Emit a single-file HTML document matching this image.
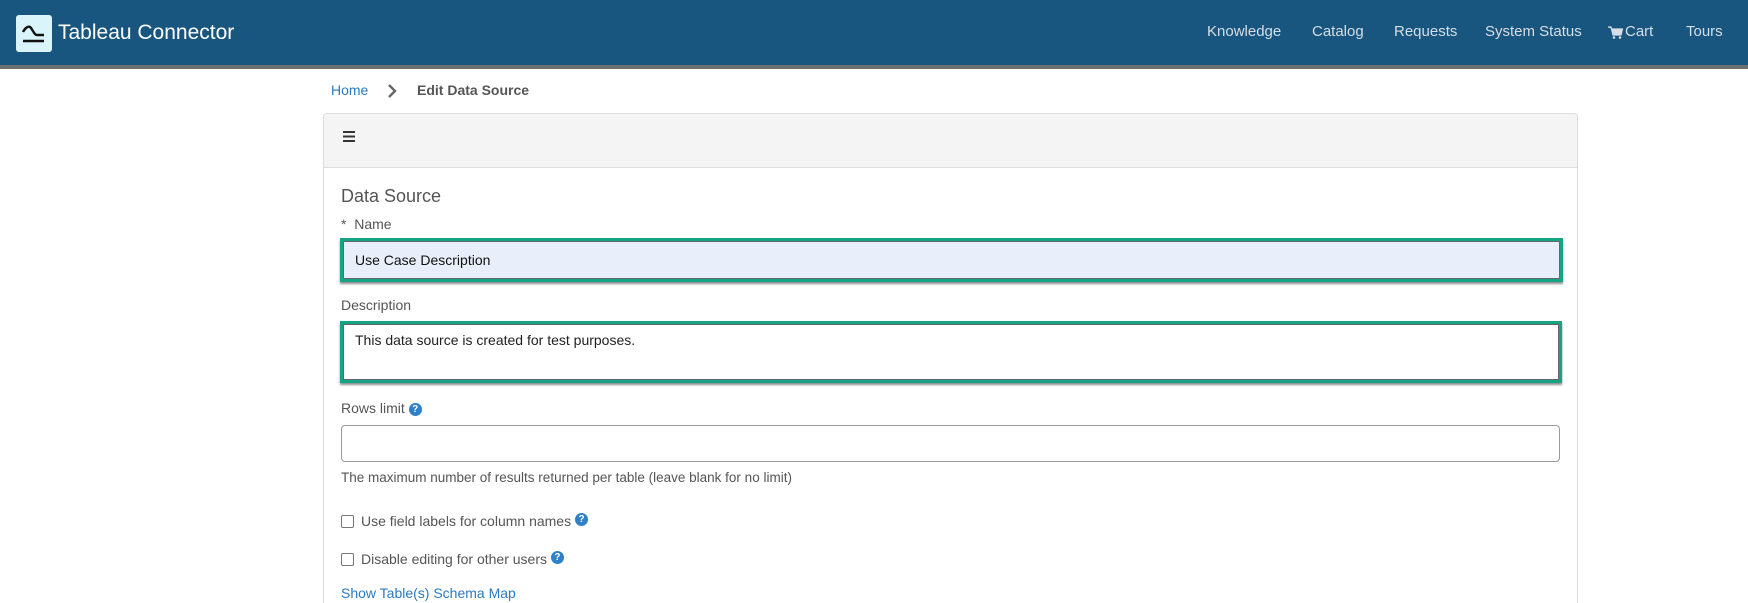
<!DOCTYPE html>
<html><head><meta charset="utf-8"><style>
*{box-sizing:border-box;margin:0;padding:0}
html,body{width:1748px;height:603px;overflow:hidden}
body{background:#fff;font-family:"Liberation Sans",sans-serif;position:relative;color:#555}
.a{position:absolute;white-space:nowrap}
.hdr{position:absolute;left:0;top:0;width:1748px;height:65px;background:#185680}
.bar{position:absolute;left:0;top:65px;width:1748px;height:4px;background:#6e6e6e}
.nav{color:#d6dde4;font-size:15px;top:23px}
.lbl{font-size:14px;color:#555}
.box{position:absolute;border:3px solid #14a586;box-shadow:0 2px 2px rgba(0,0,0,.45), inset 0 0 0 1px #666}
.q{display:inline-block;width:13px;height:13px;border-radius:50%;background:#2f7fc9;color:#fff;font-size:10px;font-weight:bold;text-align:center;line-height:13px;vertical-align:1px}
.cb{position:absolute;width:13px;height:13px;border:1px solid #777;border-radius:2px;background:#fff}
</style></head><body>
<div class="hdr"></div><div class="bar"></div>
<div class="a" style="left:16px;top:15px;width:36px;height:37px;background:#d9f5fb;border-radius:3px"></div>
<svg class="a" style="left:16px;top:15px" width="36" height="37" viewBox="0 0 36 37"><path d="M7 17 C9 13 12 11 14 12 C16 13 18 20 21 20 L28 20" fill="none" stroke="#111" stroke-width="2.4"/><path d="M7 26 H28" stroke="#111" stroke-width="2.6"/></svg>
<div class="a" style="left:58px;top:21px;color:#fff;font-size:21px">Tableau Connector</div>
<div class="a nav" style="left:1207px">Knowledge</div>
<div class="a nav" style="left:1312px">Catalog</div>
<div class="a nav" style="left:1394px">Requests</div>
<div class="a nav" style="left:1485px">System Status</div>
<svg class="a" style="left:1608px;top:26px" width="15" height="13" viewBox="0 0 15 13"><path d="M0 1H3L5 9H13L14.5 3H4" fill="#d6dde4" stroke="#d6dde4" stroke-width="1.2"/><circle cx="6" cy="11.5" r="1.3" fill="#d6dde4"/><circle cx="12" cy="11.5" r="1.3" fill="#d6dde4"/></svg>
<div class="a nav" style="left:1625px">Cart</div>
<div class="a nav" style="left:1686px">Tours</div>

<div class="a" style="left:331px;top:82px;font-size:14px;color:#2a7ac0">Home</div>
<svg class="a" style="left:387px;top:84px" width="10" height="14" viewBox="0 0 10 14"><path d="M2 1L8 7L2 13" fill="none" stroke="#666" stroke-width="2.4"/></svg>
<div class="a" style="left:417px;top:82px;font-size:14px;font-weight:bold;color:#555">Edit Data Source</div>

<div class="a" style="left:323px;top:113px;width:1255px;height:490px;border:1px solid #dcdcdc;border-bottom:none;border-radius:4px 4px 0 0"></div>
<div class="a" style="left:324px;top:114px;width:1253px;height:54px;background:#f4f4f4;border-bottom:1px solid #ddd;border-radius:3px 3px 0 0"></div>
<div class="a" style="left:343px;top:131px;width:12px;height:2px;background:#333;box-shadow:0 4.5px 0 #333,0 9px 0 #333"></div>

<div class="a" style="left:341px;top:186px;font-size:18px;color:#555">Data Source</div>
<div class="a lbl" style="left:341px;top:216px">* &nbsp;Name</div>
<div class="box" style="left:340px;top:238px;width:1223px;height:44px;background:#e8effa"></div>
<div class="a" style="left:355px;top:252px;font-size:14px;color:#111">Use Case Description</div>
<div class="a lbl" style="left:341px;top:297px">Description</div>
<div class="box" style="left:340px;top:321px;width:1222px;height:62px;background:#fff"></div>
<div class="a" style="left:355px;top:332px;font-size:14px;color:#222">This data source is created for test purposes.</div>
<div class="a lbl" style="left:341px;top:400px">Rows limit <span class="q">?</span></div>
<div class="a" style="left:341px;top:425px;width:1219px;height:37px;border:1px solid #999;border-radius:4px"></div>
<div class="a lbl" style="left:341px;top:470px;font-size:13.5px">The maximum number of results returned per table (leave blank for no limit)</div>
<div class="cb" style="left:341px;top:515px"></div>
<div class="a lbl" style="left:361px;top:513px">Use field labels for column names <span class="q" style="vertical-align:4px">?</span></div>
<div class="cb" style="left:341px;top:553px"></div>
<div class="a lbl" style="left:361px;top:551px">Disable editing for other users <span class="q" style="vertical-align:4px">?</span></div>
<div class="a" style="left:341px;top:585px;font-size:14px;color:#2a7ac0">Show Table(s) Schema Map</div>
</body></html>
